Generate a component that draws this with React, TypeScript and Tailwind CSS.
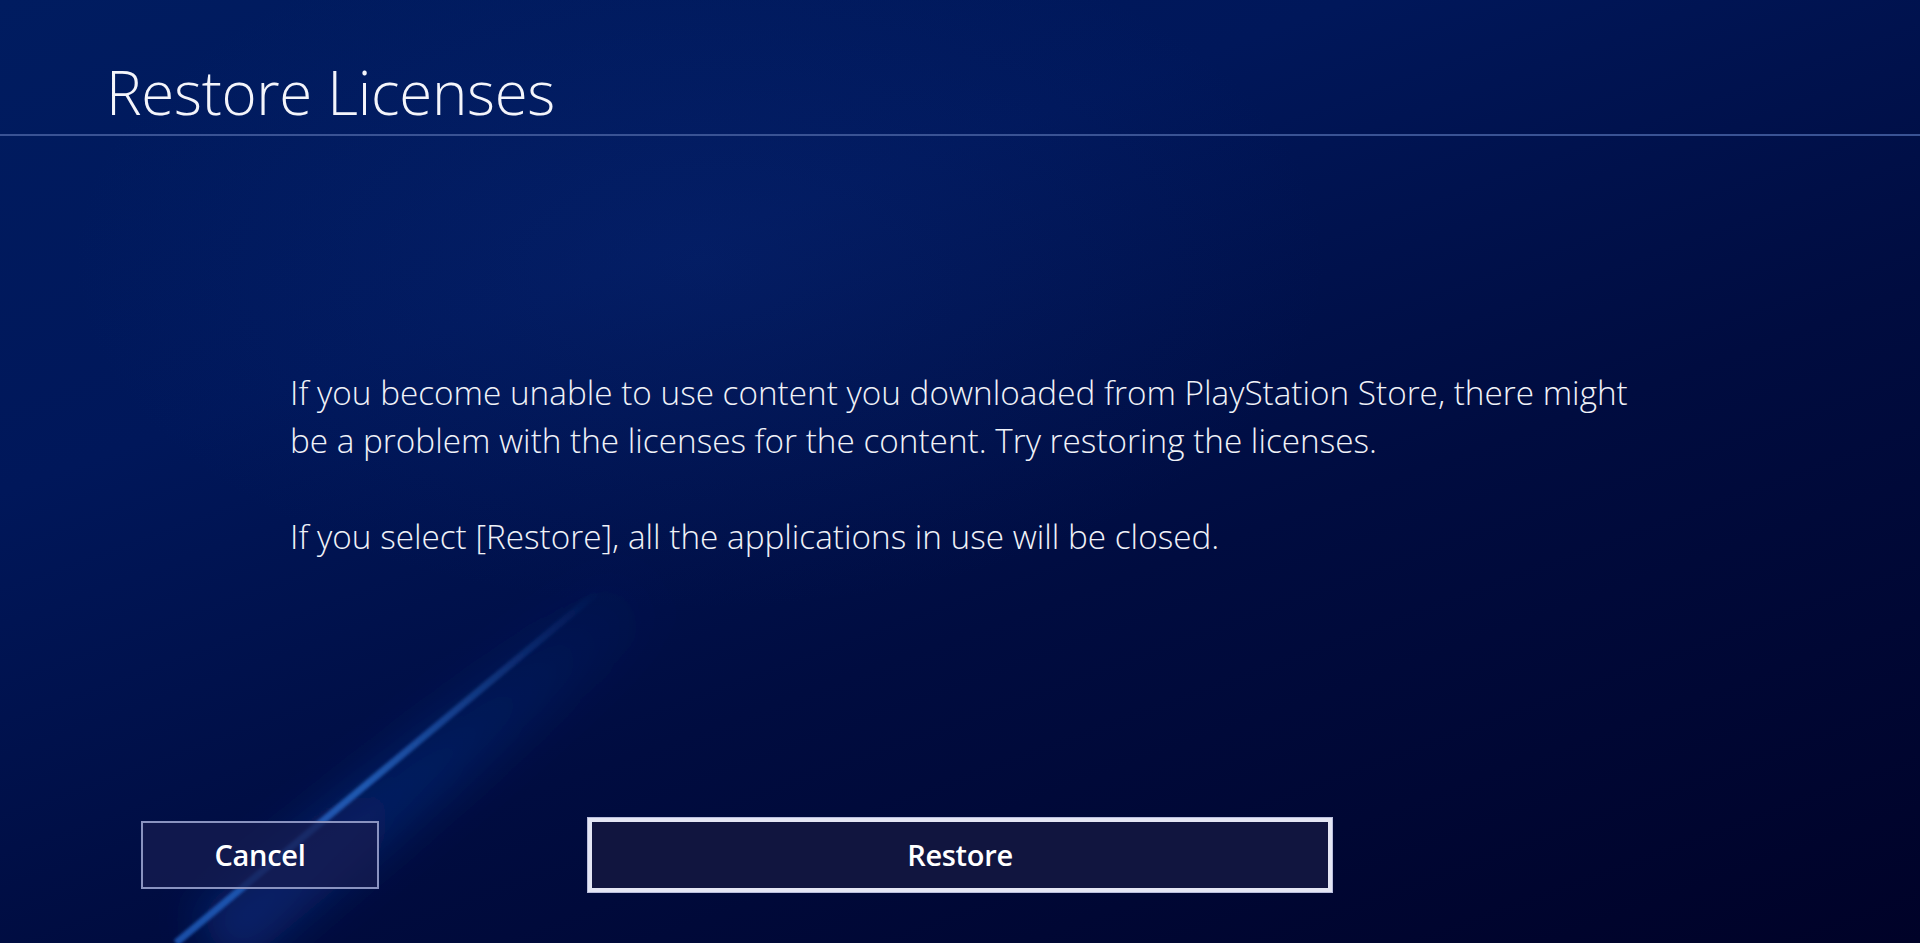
import React from "react";

export default function App() {
  return (
    <div
      className="relative w-[1920px] h-[943px] overflow-hidden bg-[linear-gradient(160deg,#001c60_0%,#00175a_30%,#000c40_60%,#000228_100%)]"
      style={{ fontFamily: '"Open Sans", "Noto Sans", sans-serif' }}
    >
      {/* background glow + streak */}
      <div className="pointer-events-none absolute inset-0 bg-[radial-gradient(ellipse_900px_500px_at_700px_260px,rgba(20,60,150,0.18),rgba(0,0,0,0)_70%)]" />
      <svg className="pointer-events-none absolute inset-0" width="1920" height="943" viewBox="0 0 1920 943">
        <defs>
          <linearGradient id="streak" x1="176" y1="943" x2="600" y2="590" gradientUnits="userSpaceOnUse">
            <stop offset="0" stopColor="#1f5fc0" stopOpacity="0.8" />
            <stop offset="0.45" stopColor="#2a6ccc" stopOpacity="0.75" />
            <stop offset="1" stopColor="#2a6ccc" stopOpacity="0" />
          </linearGradient>
          <linearGradient id="glow" x1="176" y1="943" x2="640" y2="560" gradientUnits="userSpaceOnUse">
            <stop offset="0" stopColor="#1448b0" stopOpacity="0.4" />
            <stop offset="0.5" stopColor="#1448b0" stopOpacity="0.25" />
            <stop offset="1" stopColor="#1448b0" stopOpacity="0" />
          </linearGradient>
          <filter id="blur" x="-50%" y="-50%" width="200%" height="200%">
            <feGaussianBlur stdDeviation="22" />
          </filter>
          <filter id="soft" x="-50%" y="-50%" width="200%" height="200%">
            <feGaussianBlur stdDeviation="1.6" />
          </filter>
        </defs>
        <line x1="215" y1="943" x2="680" y2="560" stroke="url(#glow)" strokeWidth="70" filter="url(#blur)" />
        <line x1="176" y1="943" x2="600" y2="590" stroke="url(#streak)" strokeWidth="7" filter="url(#soft)" />
      </svg>

      <div className="relative flex flex-col h-full">
        <header className="h-[136px] border-b-2 border-[#3a5394] pl-[106px] pt-[57px]">
          <h1 className="text-[60px] leading-[70px] font-light text-[#f4f5fb] tracking-[-0.3px]">
            Restore Licenses
          </h1>
        </header>

        <section className="pl-[290px] pt-[232px] text-[33.3px] leading-[48px] font-light text-[#f0f2f8]">
          <p>If you become unable to use content you downloaded from PlayStation Store, there might</p>
          <p>be a problem with the licenses for the content. Try restoring the licenses.</p>
          <p className="mt-[48px]">If you select [Restore], all the applications in use will be closed.</p>
        </section>

        <div className="mt-auto mb-[51px] flex items-center pl-[141px] gap-[209px]">
          <button className="w-[238px] h-[68px] border-2 border-[#8a93c0] bg-[#161c50]/75 text-[29px] font-semibold text-white tracking-[-0.3px]">
            Cancel
          </button>
          <button className="w-[744px] h-[74px] border-4 border-[#e4e6f4] bg-[#11153f] text-[29px] font-semibold text-white tracking-[-0.3px] shadow-[0_0_0_1px_#b8bddc]">
            Restore
          </button>
        </div>
      </div>
    </div>
  );
}
